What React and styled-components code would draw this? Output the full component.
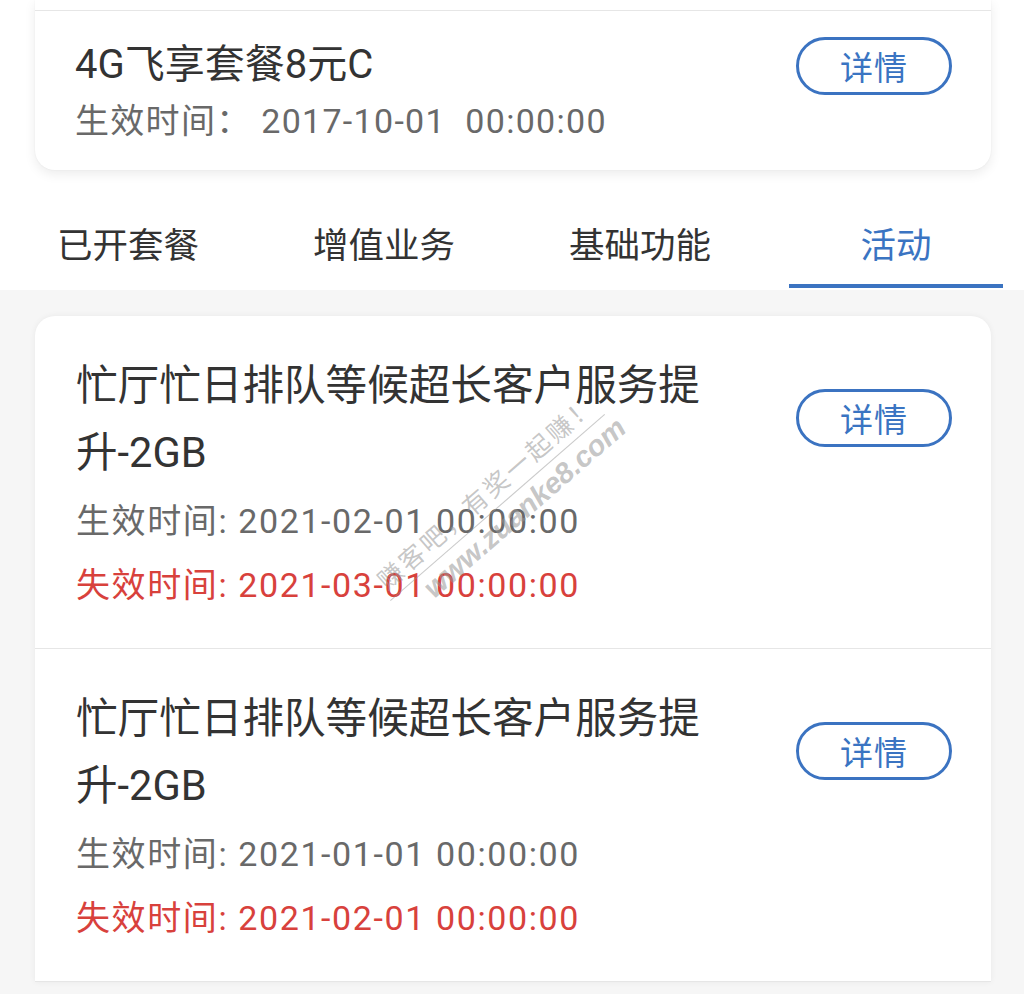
import React from 'react';
import styled, { createGlobalStyle } from 'styled-components';

const GlobalStyle = createGlobalStyle`
  html, body {
    margin: 0;
    padding: 0;
    background: #ffffff;
  }

  body {
    font-family: Roboto, "Noto Sans CJK SC", "Noto Sans", sans-serif;
    color: #333333;
    -webkit-font-smoothing: antialiased;
  }
`;

const Page = styled.div`
  width: 1024px;
  height: 994px;
  overflow: hidden;
  display: flex;
  flex-direction: column;
`;

const TopSection = styled.section`
  background: #ffffff;
`;

const PackageCard = styled.div`
  background: #ffffff;
  margin: 0 33px 0 35px;
  border-radius: 0 0 20px 20px;
  box-shadow: 0 4px 12px rgba(0, 0, 0, 0.08), 0 0 2px rgba(0, 0, 0, 0.06);
  padding-top: 10px;
`;

const ListCard = styled.div`
  position: relative;
  background: #ffffff;
  border-radius: 20px 20px 0 0;
  box-shadow: 0 0 6px rgba(0, 0, 0, 0.06);
  margin: 0 33px 0 35px;
`;

const ItemRow = styled.div`
  display: flex;
  justify-content: space-between;
  align-items: flex-start;
  padding: ${({ $compact }) => ($compact ? '29px 39px 27px 40px' : '36px 39px 31px 41px')};
  border-top: ${({ $divider }) => ($divider ? '1px solid #e6e6e6' : 'none')};
  border-bottom: ${({ $last }) => ($last ? '1px solid #e6e6e6' : 'none')};
`;

const ItemInfo = styled.div`
  display: flex;
  flex-direction: column;
`;

const PlanName = styled.div`
  font-size: 40px;
  line-height: 50px;
  color: #333333;
`;

const ActivityName = styled.div`
  width: 650px;
  font-size: 41.6px;
  line-height: 67px;
  color: #333333;
`;

const TimeLine = styled.div`
  font-size: 34px;
  line-height: ${({ $tall }) => ($tall ? '64px' : '44px')};
  margin-top: ${({ $gap }) => $gap || 0}px;
  letter-spacing: ${({ $tall }) => ($tall ? '1.6px' : '1.3px')};
  white-space: pre;
  color: ${({ $expire }) => ($expire ? '#d8413c' : '#696969')};
`;

const DetailButton = styled.button`
  flex: none;
  width: 156px;
  height: 58px;
  margin-top: ${({ $offset }) => $offset}px;
  border: 3px solid #3b73c1;
  border-radius: 30px;
  background: #ffffff;
  color: #3a74c2;
  font-family: Roboto, "Noto Sans CJK SC", sans-serif;
  font-size: 33px;
  letter-spacing: 1px;
  padding: 0;
  cursor: pointer;
`;

const TabBar = styled.nav`
  display: grid;
  grid-template-columns: repeat(4, 1fr);
  height: 92px;
  margin-top: 28px;
  background: #ffffff;
`;

const Tab = styled.div`
  display: flex;
  flex-direction: column;
  align-items: center;
  padding-top: 23px;
`;

const TabLabel = styled.span`
  font-size: 35.5px;
  line-height: 50px;
  color: ${({ $active }) => ($active ? '#3a74c2' : '#333333')};
`;

const TabIndicator = styled.span`
  width: 214px;
  height: 4px;
  margin-top: 13px;
  background: ${({ $active }) => ($active ? '#3b73c1' : 'transparent')};
`;

const ListSection = styled.section`
  flex: 1;
  background: #f6f6f6;
  padding-top: 26px;
`;

const Watermark = styled.div`
  position: absolute;
  left: 356px;
  top: 252px;
  display: flex;
  flex-direction: column;
  align-items: flex-start;
  transform: rotate(-41deg);
  transform-origin: left center;
  pointer-events: none;
  color: rgba(150, 150, 150, 0.55);
`;

const WatermarkTop = styled.span`
  font-size: 25px;
  line-height: 30px;
  letter-spacing: 3px;
  padding-left: 4px;
  border-bottom: 1px solid rgba(150, 150, 150, 0.5);
  padding-bottom: 2px;
`;

const WatermarkUrl = styled.span`
  font-family: "Liberation Sans", Arial, sans-serif;
  font-weight: bold;
  font-style: italic;
  font-size: 29px;
  line-height: 34px;
  padding-left: 34px;
`;

const tabs = ['已开套餐', '增值业务', '基础功能', '活动'];

const activities = [
  { name: '忙厅忙日排队等候超长客户服务提升-2GB', start: '2021-02-01 00:00:00', end: '2021-03-01 00:00:00' },
  { name: '忙厅忙日排队等候超长客户服务提升-2GB', start: '2021-01-01 00:00:00', end: '2021-02-01 00:00:00' },
];

const App = () => (
  <Page>
    <GlobalStyle />
    <TopSection>
      <PackageCard>
        <ItemRow $compact $divider>
          <ItemInfo>
            <PlanName>4G飞享套餐8元C</PlanName>
            <TimeLine $gap={9}>{'生效时间： 2017-10-01  00:00:00'}</TimeLine>
          </ItemInfo>
          <DetailButton $offset={-3}>详情</DetailButton>
        </ItemRow>
      </PackageCard>
      <TabBar>
        {tabs.map((t, i) => (
          <Tab key={t}>
            <TabLabel $active={i === 3}>{t}</TabLabel>
            <TabIndicator $active={i === 3} />
          </Tab>
        ))}
      </TabBar>
    </TopSection>

    <ListSection>
      <ListCard>
        {activities.map((a, i) => (
          <ItemRow key={i} $divider={i > 0} $last={i === activities.length - 1}>
            <ItemInfo>
              <ActivityName>{a.name}</ActivityName>
              <TimeLine $tall $gap={3}>{'生效时间: ' + a.start}</TimeLine>
              <TimeLine $tall $expire>{'失效时间: ' + a.end}</TimeLine>
            </ItemInfo>
            <DetailButton $offset={37}>详情</DetailButton>
          </ItemRow>
        ))}
        <Watermark>
          <WatermarkTop>赚客吧，有奖一起赚！</WatermarkTop>
          <WatermarkUrl>www.zuanke8.com</WatermarkUrl>
        </Watermark>
      </ListCard>
    </ListSection>
  </Page>
);

export default App;
